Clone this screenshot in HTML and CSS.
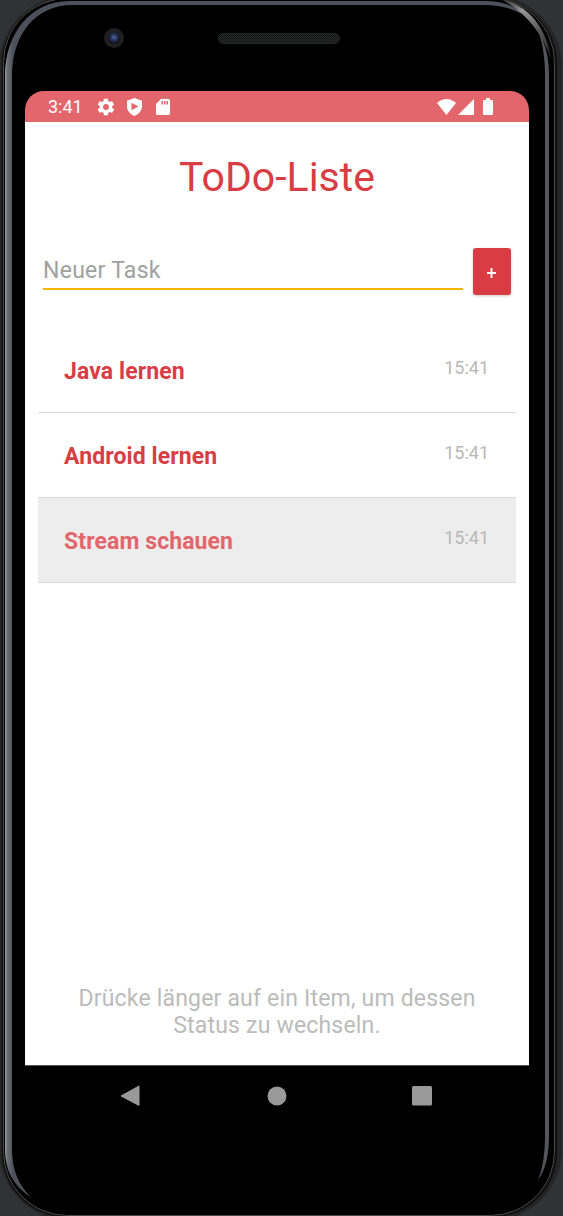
FILE: index.html
```
<!DOCTYPE html>
<html lang="de">
<head>
<meta charset="utf-8">
<title>ToDo-Liste</title>
<link rel="stylesheet" href="styles.css">
</head>
<body>
<div class="phone">
  <svg class="shell" width="563" height="1216" viewBox="0 0 563 1216" aria-hidden="true">
    <defs>
      <linearGradient id="edge" x1="5" x2="13" y1="0" y2="0" gradientUnits="userSpaceOnUse">
        <stop offset="0" stop-color="#a0a2a5"/><stop offset=".25" stop-color="#6e7177"/><stop offset="1" stop-color="#4c515b"/>
      </linearGradient>
      <linearGradient id="shine" x1="505" x2="554" y1="0" y2="60" gradientUnits="userSpaceOnUse">
        <stop offset="0" stop-color="#333"/><stop offset=".25" stop-color="#999"/><stop offset=".6" stop-color="#555"/><stop offset="1" stop-color="#555" stop-opacity="0"/>
      </linearGradient>
      <pattern id="mesh" width="2" height="2" patternUnits="userSpaceOnUse">
        <rect width="2" height="2" fill="#292b2b"/><path d="M0 0h1v1H0zM1 1h1v1H1z" fill="#121313"/>
      </pattern>
      <radialGradient id="lens" cx=".5" cy=".45" r=".5">
        <stop offset="0" stop-color="#5368a0"/><stop offset=".45" stop-color="#293861"/><stop offset="1" stop-color="#11131c"/>
      </radialGradient>
    </defs>
    <rect width="563" height="1216" fill="#303236"/>
    <rect x="-1" y="-5" width="563" height="1226" rx="72" fill="#242424"/>
    <rect x="1" y="-2" width="557" height="1220" rx="66" fill="#111" stroke="#2c2c2b"/>
    <rect x="3.500" y="-1.500" width="551" height="1217" rx="64" fill="#000" stroke="#4a4a4a"/>
    <path d="M5 1148V76C5 34 30 1 70 1h415c15 0 30 4 37 13-9-5-22-9-37-9H72C36 5 12 34 12 76v1072c0 24 8 39 20 50C14 1186 5 1172 5 1148z" fill="url(#edge)"/>
    <path d="M539 33c7 12 10 26 10 42v1060c0 19-3 34-11 45 5-12 7-27 7-45V75c0-16-2-29-6-42z" fill="#55565d"/>
    <path d="M504 0c24 8 40 25 47 58-9-27-24-45-47-58z" fill="url(#shine)" stroke="url(#shine)" stroke-width="1.500"/>
    <circle cx="114" cy="38" r="10" fill="#202022"/>
    <circle cx="114" cy="38" r="6" fill="url(#lens)"/>
    <rect x="218.500" y="33.500" width="121" height="10" rx="5" fill="url(#mesh)" stroke="#242626"/>
  </svg>

  <div class="screen">
    <header class="status">
      <span class="clock">3:41</span>
      <svg class="gear" width="20" height="20" viewBox="0 0 24 24"><path fill-rule="evenodd" d="M19.400 13a7.700 7.700 0 0 0 0-2l2.100-1.600a.5.5 0 0 0 .1-.7l-2-3.400a.5.5 0 0 0-.6-.2l-2.500 1a7.300 7.300 0 0 0-1.700-1l-.4-2.600a.5.5 0 0 0-.5-.5h-4a.5.5 0 0 0-.5.5L9 5.100a7.300 7.300 0 0 0-1.700 1l-2.500-1a.5.5 0 0 0-.6.2l-2 3.400a.5.5 0 0 0 .1.700L4.500 11a7.700 7.700 0 0 0 0 2l-2.200 1.600a.5.5 0 0 0-.1.700l2 3.400c.1.200.4.300.6.200l2.500-1a7.300 7.300 0 0 0 1.700 1l.4 2.600c0 .3.200.5.5.5h4c.3 0 .5-.2.500-.5l.4-2.600a7.300 7.300 0 0 0 1.700-1l2.500 1c.2.100.5 0 .6-.2l2-3.400a.5.5 0 0 0-.1-.7zM12 15.500a3.500 3.500 0 1 1 0-7 3.500 3.500 0 0 1 0 7z"/></svg>
      <svg class="shield" width="15" height="18" viewBox="0 0 15 18"><path fill-rule="evenodd" d="M7.500 0 15 2.800V8c0 4.600-3 8.300-7.500 10C3 16.300 0 12.600 0 8V2.800zM4.500 4.800v7.400l7-3.700z"/></svg>
      <svg class="card" width="14" height="16" viewBox="0 0 14 16"><path fill-rule="evenodd" d="M5 0h7.500Q14 0 14 1.500v13q0 1.500-1.500 1.500h-11Q0 16 0 14.500V5zM5.500 2v3.500H7V2zM8 2v3.500h1.500V2zM10.500 2v3.500H12V2z"/></svg>
      <span class="grow"></span>
      <svg width="20" height="16" viewBox="0 0 20 16"><path d="M0 4Q9.500-4 19 4L9.500 16z"/></svg>
      <svg width="17" height="16" viewBox="0 0 17 16"><path d="M17 0v16H1z"/></svg>
      <svg class="battery" width="10" height="17" viewBox="0 0 10 17"><path d="M3 0h4v2h2q1 0 1 1v13q0 1-1 1H1q-1 0-1-1V3q0-1 1-1h2z"/></svg>
    </header>

    <main class="app">
      <h1 class="title">ToDo-Liste</h1>
      <div class="entry">
        <div class="field">Neuer Task</div>
        <button class="add"><svg width="9" height="10" viewBox="0 0 9 10"><path d="M4.500 0v10M0 5h9" stroke="#fff" stroke-width="1.900"/></svg></button>
      </div>
      <ul class="list">
        <li class="item"><span>Java lernen</span><time>15:41</time></li>
        <li class="item"><span>Android lernen</span><time>15:41</time></li>
        <li class="item done"><span>Stream schauen</span><time>15:41</time></li>
      </ul>
      <p class="hint">Drücke länger auf ein Item, um dessen<br>Status zu wechseln.</p>
    </main>

    <nav class="nav">
      <svg width="20" height="22" viewBox="0 0 20 22"><path d="M19 1v19.500L1 11z" stroke="#999" stroke-linejoin="round"/></svg>
      <svg width="20" height="20" viewBox="0 0 20 20"><circle cx="11" cy="10" r="9.500"/></svg>
      <svg width="20" height="20" viewBox="0 0 20 20"><rect width="20" height="19.500" rx="1.500"/></svg>
    </nav>
  </div>
</div>
</body>
</html>
```
FILE: styles.css
```
* { box-sizing: border-box; }
body { margin: 0; background: #303236; font-family: Roboto, sans-serif; }
svg { display: block; flex: none; overflow: visible; }
.phone { position: relative; width: 563px; height: 1216px; padding: 91px 34px 0 25px; overflow: hidden; }
.shell { position: absolute; left: 0; top: 0; overflow: hidden; }
.screen { position: relative; height: 1039px; display: flex; flex-direction: column; }
.status { height: 31px; border-radius: 19px 19px 0 0; background: #e3666d; color: #fff; fill: #fff; display: flex; align-items: center; padding: 0 36px 0 23px; }
.clock { font-size: 18px; width: 48px; }
.gear { margin-right: 11px; }
.shield { margin-right: 14px; }
.grow { flex: 1; }
.battery { margin-left: 9px; }
.app { height: 943px; background: #fff; display: flex; flex-direction: column; padding: 0 13px 26px; }
.title { margin: 30px 0 0; font-size: 41px; line-height: 50px; font-weight: 400; color: #d93d44; text-align: center; }
.entry { display: flex; gap: 10px; margin: 46px 5px 0; height: 47px; }
.field { flex: 1; height: 42px; border-bottom: 2px solid #f5b400; font-size: 23px; letter-spacing: .27px; line-height: 46px; color: #a0a0a0; }
.add { width: 38px; height: 47px; padding: 2px 1px 0 0; border: 0; border-radius: 3px; background: #da3c43; box-shadow: 0 1px 3px rgba(0,0,0,.2); display: flex; align-items: center; justify-content: center; }
.list { list-style: none; margin: 33px 0 0; padding: 0; }
.item { height: 85px; display: flex; justify-content: space-between; border-bottom: 1px solid #dadada; padding: 0 27px 0 26px; color: #d93d44; font-size: 23px; letter-spacing: .1px; font-weight: 700; line-height: 88px; }
.item time { font-size: 18px; letter-spacing: 0; font-weight: 400; line-height: 80px; color: #b8b8b8; }
.done { background: #ededed; color: #e3666d; }
.hint { margin: auto 0 0; text-align: center; font-size: 23px; letter-spacing: .19px; line-height: 27px; color: #bbb; }
.nav { height: 65px; background: #000; border-top: 1px solid #555; fill: #999; display: flex; justify-content: space-between; align-items: center; padding: 0 97px 4px 95px; }
```
